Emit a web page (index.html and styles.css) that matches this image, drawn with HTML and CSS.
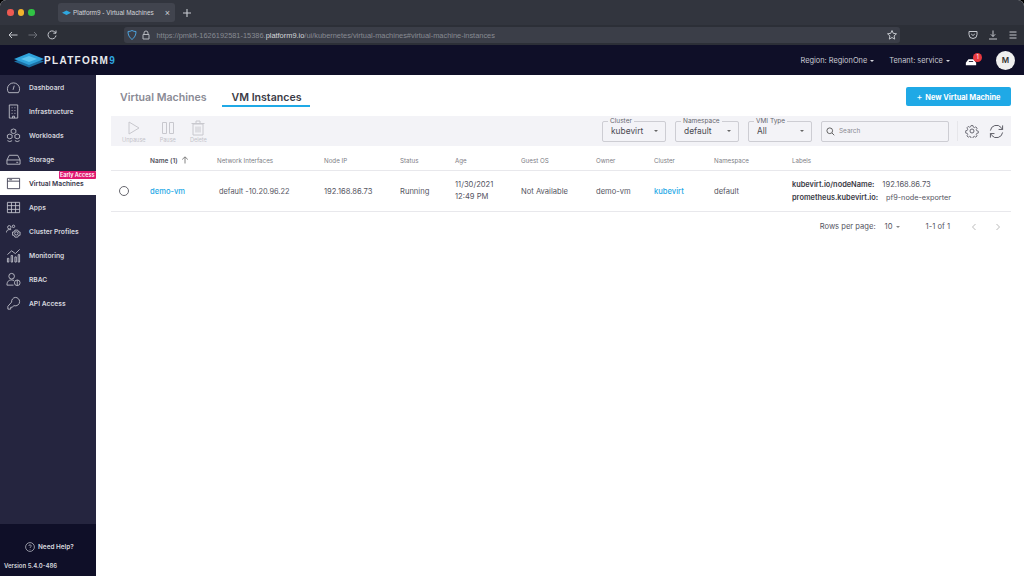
FILE: index.html
```html
<!DOCTYPE html>
<html lang="en">
<head>
    <meta charset="UTF-8">
    <title>Platform9 - Virtual Machines</title>
    <link rel="stylesheet" href="styles.css">
</head>
<body>
    <div class="window">
        <div class="tabbar">
            <div class="traffic">
                <span class="dot red"></span>
                <span class="dot yellow"></span>
                <span class="dot green"></span>
            </div>
            <div class="tab">
                <svg class="tab-logo" viewBox="0 0 14 8" width="9" height="6"><path d="M0 3.500 7 0l7 3.500L7 7z" fill="#2fa8e0"/></svg>
                <span class="tab-title">Platform9 - Virtual Machines</span>
                <span class="tab-close">×</span>
            </div>
            <svg class="new-tab" viewBox="0 0 10 10" width="10" height="10"><path d="M5 1v8M1 5h8" stroke="#c9ccd2" stroke-width="1.100"/></svg>
        </div>
        <div class="navbar">
            <svg class="nav-icon" viewBox="0 0 12 12" width="12" height="12"><path d="M10.500 6H2M5 3 2 6l3 3" fill="none" stroke="#c4c7cd"/></svg>
            <svg class="nav-icon" viewBox="0 0 12 12" width="12" height="12"><path d="M1.500 6H10M7 3l3 3-3 3" fill="none" stroke="#6d7078"/></svg>
            <svg class="nav-icon" viewBox="0 0 12 12" width="12" height="12"><path d="M10 6.500A4 4 0 1 1 8.800 3L10 4.200V1.500M10 4.200H7.300" fill="none" stroke="#c4c7cd"/></svg>
            <div class="urlbar">
                <svg viewBox="0 0 12 12" width="12" height="12"><path d="M6 1.500c1.300.8 2.600 1 4 1 0 3.500-1.300 6-4 8-2.700-2-4-4.500-4-8 1.400 0 2.700-.2 4-1z" fill="none" stroke="#4da3dd"/></svg>
                <svg viewBox="0 0 12 12" width="12" height="12"><path d="M4 5.500V4a2 2 0 0 1 4 0v1.500M3 5.500h6v4.500H3z" fill="none" stroke="#b5b8be"/></svg>
                <span class="url">https://pmkft-1626192581-15386.<b>platform9.io</b>/ui/kubernetes/virtual-machines#virtual-machine-instances</span>
                <svg class="star" viewBox="0 0 12 12" width="12" height="12"><path d="m6 1.500 1.300 2.900 3.200.4-2.400 2.100.6 3.200L6 8.500l-2.700 1.600.6-3.200-2.400-2.100 3.200-.4z" fill="none" stroke="#c4c7cd"/></svg>
            </div>
            <div class="nav-right">
                <svg viewBox="0 0 12 12" width="12" height="12"><path d="M2 2.500h8v3a4 4 0 0 1-8 0z M4.200 5 6 6.500 7.800 5" fill="none" stroke="#c4c7cd"/></svg>
                <svg viewBox="0 0 12 12" width="12" height="12"><path d="M6 1.500v6M3.800 5.300 6 7.500l2.200-2.200M2 10h8" fill="none" stroke="#c4c7cd"/></svg>
                <svg viewBox="0 0 12 12" width="12" height="12"><path d="M2.500 3h7M2.500 6h7M2.500 9h7" stroke="#c4c7cd"/></svg>
            </div>
        </div>

        <header class="app-header">
            <div class="brand">
                <svg viewBox="0 0 30 16" width="30" height="16">
                    <path d="M0 9.500 15 15.500 30 9.500 15 4z" fill="#1c6fa3"/>
                    <path d="M0 7 15 13 30 7 15 1z" fill="#2fa3dc"/>
                    <path d="M7 7 15 10 23 7 15 4z" fill="#5cc3ee"/>
                </svg>
                <span class="brand-name">PLATFORM<i>9</i></span>
            </div>
            <div class="header-right">
                <span class="picker">Region: RegionOne <u class="caret"></u></span>
                <span class="picker">Tenant: service <u class="caret"></u></span>
                <div class="bell">
                    <svg viewBox="0 0 14 10" width="12" height="9"><path d="M1 9.500V6.500L4 2.500h6l3 4v3z" fill="#fff"/><path d="M4.500 5h5" stroke="#0f0f28"/></svg>
                    <span class="badge">1</span>
                </div>
                <span class="avatar">M</span>
            </div>
        </header>

        <div class="app-body">
            <aside class="sidebar">
                <nav class="menu">
                    <a class="menu-item">
                        <svg viewBox="0 0 16 16"><path d="M2.800 13.500a6.500 6.500 0 1 1 10.400 0z M8.800 6 7.500 10.500"/></svg>
                        Dashboard
                    </a>
                    <a class="menu-item">
                        <svg viewBox="0 0 16 16"><path d="M3.500 1h9v14h-9z M6 4h1M9 4h1M6 7h1M9 7h1M6 10h1M9 10h1M7 15v-2h2v2"/></svg>
                        Infrastructure
                    </a>
                    <a class="menu-item">
                        <svg viewBox="0 0 16 16"><path d="M5.500 2 8 1l2.500 1v3L8 6 5.500 5z M1.500 7.500 4 6.500l2.500 1v3L4 11.500l-2.500-1z M9.500 7.500l2.500-1 2.500 1v3l-2.500 1-2.500-1z M4 14.500 1.500 13.500M12 14.500l2.500-1M6.500 13.500 4 14.500M9.500 13.500l2.500 1"/></svg>
                        Workloads
                    </a>
                    <a class="menu-item">
                        <svg viewBox="0 0 16 16"><path d="M1 8.500 3.500 3.500h9L15 8.500V13H1z M1 8.500h14M11 11h2"/></svg>
                        Storage
                    </a>
                    <a class="menu-item active">
                        <svg viewBox="0 0 16 16"><path d="M1.500 2.500h13v11h-13z M1.500 5.500h13M3.500 4h3"/></svg>
                        Virtual Machines
                        <span class="early">Early Access</span>
                    </a>
                    <a class="menu-item">
                        <svg viewBox="0 0 16 16"><path d="M1.500 2.500h13v11h-13z M1.500 6h13M1.500 10h13M5.800 2.500v11M10.200 2.500v11"/></svg>
                        Apps
                    </a>
                    <a class="menu-item">
                        <svg viewBox="0 0 16 16"><circle cx="3.500" cy="3.500" r="1.800"/><circle cx="8" cy="2.500" r="1.300"/><path d="M.5 9c0-2 1.200-3 3-3h2"/><circle cx="11" cy="10" r="1.800"/><path d="M7 8.500h1.500l1-2h3l1 2H15v3.500h-1.500l-1 2h-3l-1-2H7z"/></svg>
                        Cluster Profiles
                    </a>
                    <a class="menu-item">
                        <svg viewBox="0 0 16 16"><path d="M1.500 15v-4h1.500v4zM5.500 15V8H7v7zM9.500 15V9.500H11V15zM13 15V7h1.500v8zM1.500 7 6 3l4 3 4.500-4.500"/></svg>
                        Monitoring
                    </a>
                    <a class="menu-item">
                        <svg viewBox="0 0 16 16"><circle cx="6" cy="4.500" r="3"/><path d="M1 14c0-4 2-5.500 5-5.500 1 0 2 .2 2.500.6M1 14h7"/><circle cx="12" cy="11.500" r="3"/><path d="M12 8.500v6"/></svg>
                        RBAC
                    </a>
                    <a class="menu-item">
                        <svg viewBox="0 0 16 16"><path d="M10 1.500a4.500 4.500 0 0 1 4.500 4.500A4.500 4.500 0 0 1 8.500 10.300L6.500 12H5v2H2v-3l4-4.500A4.500 4.500 0 0 1 10 1.500z"/></svg>
                        API Access
                    </a>
                </nav>
                <div class="side-foot">
                    <div class="help">
                        <svg viewBox="0 0 10 10" width="10" height="10"><circle cx="5" cy="5" r="4.400" fill="none" stroke="#c9cad2" stroke-width=".7"/><path d="M3.800 4a1.200 1.200 0 1 1 1.700 1.100c-.4.200-.5.400-.5.900M5 7v.6" fill="none" stroke="#c9cad2" stroke-width=".7"/></svg>
                        Need Help?
                    </div>
                    <div class="version">Version 5.4.0-486</div>
                </div>
            </aside>

            <main class="content">
                <div class="title-row">
                    <div class="tabs">
                        <span class="page-tab">Virtual Machines</span>
                        <span class="page-tab selected">VM Instances</span>
                    </div>
                    <button class="new-btn"><span class="plus">+</span> New Virtual Machine</button>
                </div>

                <div class="toolbar">
                    <div class="actions">
                        <div class="action">
                            <svg viewBox="0 0 16 16" width="16" height="16"><path d="M3 2v12l10-6z"/></svg>
                            Unpause
                        </div>
                        <div class="action">
                            <svg viewBox="0 0 16 16" width="16" height="16"><path d="M2.500 2.500h4v11h-4zM9.500 2.500h4v11h-4z"/></svg>
                            Pause
                        </div>
                        <div class="action">
                            <svg viewBox="0 0 16 16" width="16" height="16"><path d="M3 4h10v11H3zM1.500 3.500h13M6 3V1h4v2M6 6.500v6M8 6.500v6M10 6.500v6"/></svg>
                            Delete
                        </div>
                    </div>
                    <div class="filters">
                        <div class="select">
                            <span class="select-label">Cluster</span>
                            <span>kubevirt</span>
                            <u class="caret dark"></u>
                        </div>
                        <div class="select">
                            <span class="select-label">Namespace</span>
                            <span>default</span>
                            <u class="caret dark"></u>
                        </div>
                        <div class="select">
                            <span class="select-label">VMI Type</span>
                            <span>All</span>
                            <u class="caret dark"></u>
                        </div>
                        <div class="search">
                            <svg viewBox="0 0 12 12" width="9" height="9"><circle cx="5" cy="5" r="3.800" fill="none" stroke="#555" stroke-width="1.200"/><path d="m8 8 3 3" stroke="#555" stroke-width="1.200"/></svg>
                            Search
                        </div>
                    </div>
                    <div class="tools">
                        <svg viewBox="0 0 16 16" width="14" height="14"><circle cx="8" cy="8" r="2.300"/><path d="M6.800 1h2.400l.4 2 1.500.7 1.800-1 1.600 1.800-1.100 1.700.6 1.500 2 .5v2.400l-2 .4-.6 1.500 1.100 1.700-1.700 1.700-1.700-1.100-1.500.6-.4 2H6.800l-.4-2-1.500-.6-1.700 1.100-1.700-1.700 1.100-1.700-.6-1.500-2-.4V7.700l2-.5.6-1.500-1.100-1.700 1.700-1.800 1.700 1 1.500-.7z" transform="translate(.8 .8) scale(.9)"/></svg>
                        <svg viewBox="0 0 16 16" width="15" height="15"><path d="M1.500 7A6.500 6.500 0 0 1 13 3.800l1.500 2M14.500 1.500v4.300h-4.300M14.500 9A6.500 6.500 0 0 1 3 12.200l-1.500-2M1.500 14.500v-4.300h4.300"/></svg>
                    </div>
                </div>

                <div class="row head">
                    <span></span>
                    <span class="name-head">Name (1) <svg viewBox="0 0 8 8" width="8" height="8"><path d="M4 7.500V1M1.200 3.500 4 .8l2.800 2.700" fill="none" stroke="#666" stroke-width=".8"/></svg></span>
                    <span>Network Interfaces</span>
                    <span>Node IP</span>
                    <span>Status</span>
                    <span>Age</span>
                    <span>Guest OS</span>
                    <span>Owner</span>
                    <span>Cluster</span>
                    <span>Namespace</span>
                    <span>Labels</span>
                </div>
                <div class="row data">
                    <span class="radio"></span>
                    <a class="link">demo-vm</a>
                    <span class="net">default -10.20.96.22</span>
                    <span>192.168.86.73</span>
                    <span>Running</span>
                    <span class="age">11/30/2021<br>12:49 PM</span>
                    <span>Not Available</span>
                    <span>demo-vm</span>
                    <a class="link">kubevirt</a>
                    <span>default</span>
                    <div class="labels">
                        <div><b>kubevirt.io/nodeName:</b><span>192.168.86.73</span></div>
                        <div><b>prometheus.kubevirt.io:</b><span>pf9-node-exporter</span></div>
                    </div>
                </div>

                <div class="pager">
                    <span>Rows per page:</span>
                    <span class="rows">10 <u class="caret grey"></u></span>
                    <span class="count">1-1 of 1</span>
                    <svg viewBox="0 0 8 8" width="8" height="8"><path d="M5.500 1 2.500 4l3 3" fill="none" stroke="#bbb"/></svg>
                    <svg viewBox="0 0 8 8" width="8" height="8"><path d="m2.500 1 3 3-3 3" fill="none" stroke="#bbb"/></svg>
                </div>
            </main>
        </div>
    </div>
</body>
</html>
```

FILE: styles.css
```css
:root {
    --chrome-bg: #32353e;
    --nav-bg: #2c2f37;
    --url-bg: #3b3e48;
    --header-bg: #0f0f28;
    --side-bg: #25253f;
    --accent: #1fa9e6;
    --text: #55555f;
    --muted: #7d7d85;
}
* {
    box-sizing: border-box;
}
html, body {
    margin: 0;
    height: 100%;
    overflow: hidden;
    background: #000;
}
body {
    font-family: Inter, "Liberation Sans", sans-serif;
    font-size: 7.500px;
    color: var(--text);
}
u {
    text-decoration: none;
}
.window {
    height: 576px;
    display: flex;
    flex-direction: column;
    background: #fff;
    border-radius: 6px 6px 0 0;
    overflow: hidden;
}

/* browser chrome */
.tabbar {
    height: 25px;
    flex: none;
    display: flex;
    align-items: center;
    background: var(--chrome-bg);
    padding: 0 0 0 7px;
}
.traffic {
    display: flex;
    gap: 4px;
    width: 51px;
}
.dot {
    width: 6.500px;
    height: 6.500px;
    border-radius: 50%;
}
.dot.red { background: #ee5a52; }
.dot.yellow { background: #f2b32d; }
.dot.green { background: #31c345; }
.tab {
    width: 117px;
    height: 19px;
    display: flex;
    align-items: center;
    background: #41444e;
    border-radius: 3px;
    padding: 0 5px 0 4px;
    color: #d2d4d9;
    font-family: "Liberation Sans", sans-serif;
    font-size: 6.450px;
}
.tab-logo {
    margin-right: 2px;
}
.tab-title {
    flex: 1;
    white-space: nowrap;
}
.tab-close {
    font-size: 9px;
    color: #c9ccd2;
}
.new-tab {
    margin-left: 7px;
}
.navbar {
    height: 20px;
    flex: none;
    display: flex;
    align-items: center;
    background: var(--nav-bg);
    padding-left: 7px;
    gap: 7.500px;
}
.urlbar {
    width: 776px;
    height: 16px;
    flex: none;
    margin-left: 58px;
    display: flex;
    align-items: center;
    gap: 2px;
    background: var(--url-bg);
    border-radius: 3px;
    padding: 0 2px;
    color: #878a92;
    font-family: "Liberation Sans", sans-serif;
    font-size: 7.420px;
}
.urlbar b {
    font-weight: 400;
    color: #d6d8dc;
}
.url {
    flex: 1;
    margin-left: 3px;
    white-space: nowrap;
}
.nav-right {
    display: flex;
    gap: 8px;
    margin-left: 60px;
}

/* app header */
.app-header {
    height: 30px;
    flex: none;
    display: flex;
    align-items: center;
    justify-content: space-between;
    background: var(--header-bg);
    padding: 0 9px 0 14px;
}
.brand {
    display: flex;
    align-items: center;
}
.brand-name {
    color: #e8eaee;
    font-family: "Liberation Sans", sans-serif;
    font-size: 10px;
    font-weight: 700;
    letter-spacing: 1.300px;
}
.brand-name i {
    font-style: normal;
    color: #2fa8e0;
}
.header-right {
    display: flex;
    align-items: center;
    color: #c9cad2;
    font-size: 7.400px;
}
.picker {
    margin-right: 15px;
    white-space: nowrap;
}
.caret {
    display: inline-block;
    width: 0;
    height: 0;
    margin-left: 1px;
    vertical-align: 1px;
    border: 2.500px solid transparent;
    border-top-color: #d5d6dc;
    border-bottom: 0;
}
.caret.dark { border-top-color: #666; }
.caret.grey { border-top-color: #888; }
.bell {
    position: relative;
    display: flex;
    margin: 2px 19px 0 0;
}
.badge {
    position: absolute;
    top: -4px;
    right: -5px;
    width: 9px;
    height: 9px;
    border-radius: 50%;
    background: #e8383f;
    color: #fff;
    font-size: 5.500px;
    line-height: 9px;
    text-align: center;
}
.avatar {
    width: 19px;
    height: 19px;
    border-radius: 50%;
    background: #f0f0f0;
    color: #333;
    font-size: 8px;
    font-weight: 600;
    line-height: 19px;
    text-align: center;
}

/* sidebar */
.app-body {
    flex: 1;
    display: flex;
    min-height: 0;
}
.sidebar {
    width: 96px;
    flex: none;
    display: flex;
    flex-direction: column;
    background: var(--side-bg);
}
.menu {
    flex: 1;
}
.menu-item {
    position: relative;
    height: 24px;
    display: flex;
    align-items: center;
    gap: 8px;
    padding: 1px 0 0 6px;
    color: #d6d7de;
    font-size: 6.700px;
    font-weight: 600;
    white-space: nowrap;
}
.menu-item svg {
    width: 15px;
    height: 15px;
    flex: none;
    fill: none;
    stroke: #c9cad2;
    stroke-width: .9;
}
.menu-item.active {
    background: #fff;
    color: #34344a;
}
.menu-item.active svg {
    stroke: #34344a;
}
.early {
    position: absolute;
    top: 0;
    right: 0;
    background: #e0176f;
    color: #fff;
    font-size: 5.500px;
    font-weight: 600;
    line-height: 8px;
    padding: 0 1.500px;
    border-radius: 1px;
}
.side-foot {
    height: 52px;
    flex: none;
    background: var(--header-bg);
    padding-top: 18px;
    color: #d6d7de;
    font-size: 6.400px;
    font-weight: 600;
}
.help {
    display: flex;
    align-items: center;
    gap: 3px;
    padding-left: 25px;
}
.version {
    margin-top: 10px;
    padding-left: 4px;
    font-size: 6px;
}

/* main */
.content {
    flex: 1;
    min-width: 0;
    padding: 12px 13px 0 15px;
}
.title-row {
    height: 29px;
    display: flex;
    justify-content: space-between;
    align-items: flex-start;
}
.tabs {
    display: flex;
    gap: 7px;
}
.page-tab {
    height: 20px;
    padding: 4px 9px 0;
    color: #8a8a94;
    font-size: 10.600px;
    font-weight: 600;
    white-space: nowrap;
}
.page-tab.selected {
    color: #3b3b46;
    border-bottom: 2px solid var(--accent);
}
.new-btn {
    width: 105px;
    height: 19px;
    border: 0;
    border-radius: 2px;
    background: var(--accent);
    color: #fff;
    font-family: inherit;
    font-size: 7.400px;
    font-weight: 700;
    padding: 0;
}
.plus {
    font-weight: 400;
    font-size: 9px;
    margin-right: 1px;
}
.toolbar {
    height: 30px;
    display: flex;
    align-items: center;
    background: #f3f3f7;
}
.actions {
    display: flex;
    gap: 14px;
    padding-left: 11px;
    flex: 1;
}
.action {
    display: flex;
    flex-direction: column;
    align-items: center;
    gap: 1px;
    color: #c3c3ca;
    font-size: 5.600px;
}
.action svg {
    fill: none;
    stroke: #c8c8ce;
}
.filters {
    display: flex;
    gap: 9px;
}
.select {
    position: relative;
    width: 64px;
    height: 21px;
    display: flex;
    align-items: center;
    justify-content: space-between;
    padding: 0 7px 0 8px;
    border: 1px solid #cdcdd3;
    border-radius: 2px;
    color: #4a4a52;
    font-size: 8.400px;
}
.select-label {
    position: absolute;
    top: -5px;
    left: 5px;
    padding: 0 2px;
    background: #f3f3f7;
    color: #66666e;
    font-size: 6.500px;
    line-height: 8px;
}
.search {
    width: 128px;
    height: 21px;
    display: flex;
    align-items: center;
    gap: 4px;
    padding-left: 4px;
    border: 1px solid #cdcdd3;
    border-radius: 2px;
    color: #8a8a92;
    font-size: 6.400px;
}
.tools {
    display: flex;
    align-items: center;
    gap: 10px;
    margin-left: 8px;
    padding: 0 7px;
    border-left: 1px solid #e6e6ea;
    height: 20px;
}
.tools svg {
    fill: none;
    stroke: #55555f;
    stroke-width: 1;
}
.row {
    display: grid;
    grid-template-columns: 39px 67px 107px 76px 55px 66px 75px 58px 60px 78px 1fr;
    align-items: center;
    border-bottom: 1px solid #e8e8ec;
    white-space: nowrap;
}
.row.head {
    height: 25px;
    padding-top: 4px;
    color: var(--muted);
    font-size: 6.200px;
}
.name-head {
    color: #55555f;
    font-weight: 600;
    font-size: 6.500px;
}
.name-head svg {
    margin-left: 2px;
    vertical-align: -1px;
}
.row.data {
    height: 41px;
    font-size: 7.600px;
    line-height: 13px;
}
.age {
    line-height: 12px;
}
.radio {
    width: 10px;
    height: 10px;
    margin-left: 8px;
    border: 1px solid #66666e;
    border-radius: 50%;
}
.link {
    color: var(--accent);
    font-weight: 500;
}
.net {
    padding-left: 2px;
    font-size: 7.400px;
}
.labels b {
    font-size: 7.400px;
    font-weight: 600;
    color: #3b3b46;
    margin-right: 8px;
}
.labels div + div span {
    font-size: 7.300px;
}
.pager {
    display: flex;
    align-items: center;
    justify-content: flex-end;
    height: 29px;
    padding-right: 9px;
    font-size: 7.600px;
}
.rows {
    margin-left: 9px;
}
.count {
    margin: 0 20px 0 26px;
}
.pager svg + svg {
    margin-left: 16px;
}
```
